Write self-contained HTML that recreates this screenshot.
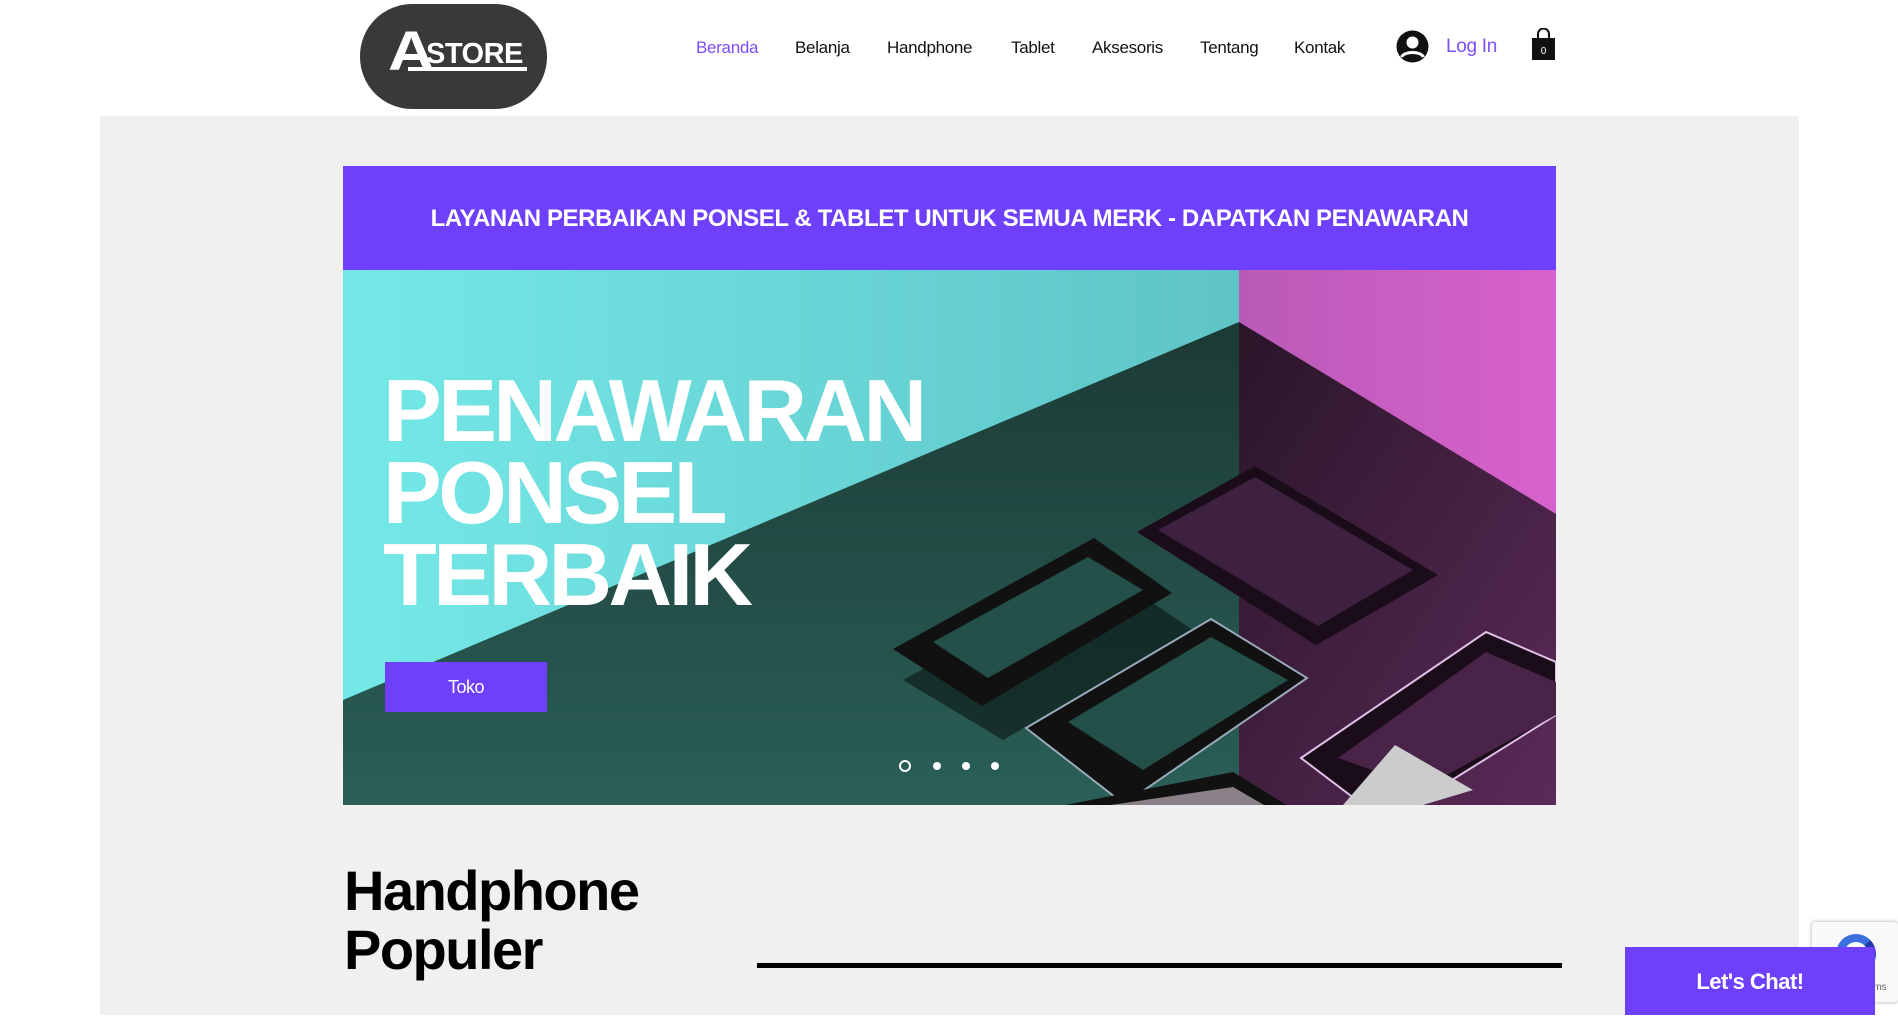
<!DOCTYPE html>
<html><head><meta charset="utf-8"><style>
*{margin:0;padding:0;box-sizing:border-box}
body{width:1898px;height:1015px;overflow:hidden;background:#fff;font-family:"Liberation Sans",sans-serif;position:relative}
.abs{position:absolute}
.nav a{position:absolute;top:38px;font-size:17px;color:#111;text-decoration:none;letter-spacing:-0.3px}
</style></head><body>
<div class="abs" style="left:360px;top:4px;width:187px;height:105px;border-radius:52px/52px;background:#3a383a"></div>
<div class="abs" style="left:388px;top:24px;color:#fff;font-weight:bold;font-size:56px;line-height:54px;transform:scaleX(1.15);transform-origin:left">A</div>
<div class="abs" style="left:426px;top:40px;color:#fff;font-weight:bold;font-size:29px;line-height:29px;letter-spacing:-0.5px">STORE</div>
<div class="abs" style="left:408px;top:67px;width:119px;height:4px;background:#fff"></div>
<div class="nav">
<a style="left:696px;color:#7b4ef9">Beranda</a>
<a style="left:795px">Belanja</a>
<a style="left:887px">Handphone</a>
<a style="left:1011px">Tablet</a>
<a style="left:1092px">Aksesoris</a>
<a style="left:1200px">Tentang</a>
<a style="left:1294px">Kontak</a>
</div>
<svg class="abs" style="left:1396px;top:30px" width="33" height="33" viewBox="0 0 33 33"><circle cx="16.5" cy="16.5" r="16" fill="#111"/><circle cx="16.5" cy="12.5" r="6" fill="#fff"/><path d="M5.5 27c3-6 19-6 22 0" stroke="#fff" stroke-width="3" fill="none"/></svg>
<div class="abs" style="left:1446px;top:36px;font-size:19px;color:#7b4ef9;letter-spacing:-0.3px">Log In</div>
<svg class="abs" style="left:1531px;top:28px" width="25" height="33" viewBox="0 0 25 33"><path d="M7 10V6a5.5 5.5 0 0 1 11 0v4" stroke="#111" stroke-width="2" fill="none"/><rect x="1" y="10" width="23" height="22" fill="#111"/><text x="12.5" y="26" font-size="10" fill="#fff" text-anchor="middle" font-family="Liberation Sans">0</text></svg>

<div class="abs" style="left:100px;top:116px;width:1699px;height:899px;background:#f0f0f0"></div>
<div class="abs" style="left:343px;top:166px;width:1213px;height:104px;background:#6f40fb"></div>
<div class="abs" style="left:343px;top:205px;width:1213px;text-align:center;color:#fff;font-weight:bold;font-size:24px;letter-spacing:-0.4px">LAYANAN PERBAIKAN PONSEL &amp; TABLET UNTUK SEMUA MERK - DAPATKAN PENAWARAN</div>

<svg class="abs" style="left:343px;top:270px" width="1213" height="535" viewBox="0 0 1213 535">
<defs>
<linearGradient id="t" x1="0" y1="0" x2="1" y2="0"><stop offset="0" stop-color="#74e8e8"/><stop offset="1" stop-color="#5fc4c6"/></linearGradient>
<linearGradient id="m" x1="0" y1="0" x2="1" y2="0"><stop offset="0" stop-color="#b95ab8"/><stop offset="1" stop-color="#d862cc"/></linearGradient>
<linearGradient id="g" x1="0" y1="0" x2="0" y2="1"><stop offset="0" stop-color="#1c3a35"/><stop offset="1" stop-color="#2a5f57"/></linearGradient>
<linearGradient id="p" x1="0" y1="0" x2="1" y2="1"><stop offset="0" stop-color="#2a1528"/><stop offset="1" stop-color="#5a2a58"/></linearGradient>
</defs>
<rect width="896" height="535" fill="url(#t)"/>
<rect x="896" width="317" height="535" fill="url(#m)"/>
<polygon points="0,430 896,52 896,535 0,535" fill="url(#g)"/>
<polygon points="896,52 1213,244 1213,535 896,535" fill="url(#p)"/>
<polygon points="560,410 760,300 850,360 660,470" fill="#0a1412" opacity=".6"/>
<polygon points="550,379 751,268 829,323 639,436" fill="#111"/>
<polygon points="590,372 745,287 800,320 645,408" fill="#24504a"/>
<polygon points="794,262 912,196 1095,305 973,375" fill="#1a0c18"/>
<polygon points="815,260 912,207 1070,300 975,356" fill="#3e2040"/>
<polygon points="683,458 868,349 964,408 781,534" fill="#111" stroke="#9ab" stroke-width="2"/>
<polygon points="725,452 868,367 945,410 800,500" fill="#24504a"/>
<polygon points="958,488 1143,362 1213,392 1213,445 1069,535 1020,535" fill="#1a0c18" stroke="#e0c0e8" stroke-width="2"/>
<polygon points="995,488 1143,382 1213,412 1213,445 1080,518" fill="#4a2448"/>
<polygon points="672,545 890,502 1010,576 851,680" fill="#111"/>
<polygon points="700,545 890,517 990,575 860,660" fill="#8a8088"/>
<polygon points="1000,535 1052,475 1130,520 1080,535" fill="#ccc"/>
<circle cx="562" cy="496" r="5" fill="none" stroke="#fff" stroke-width="2"/>
<circle cx="594" cy="496" r="4" fill="#fff"/>
<circle cx="623" cy="496" r="4" fill="#fff"/>
<circle cx="652" cy="496" r="4" fill="#fff"/>
</svg>
<div class="abs" style="left:383px;top:370px;color:#fff;font-weight:bold;font-size:88px;line-height:82px;letter-spacing:-3.5px">PENAWARAN<br>PONSEL<br>TERBAIK</div>
<div class="abs" style="left:385px;top:662px;width:162px;height:50px;background:#6f40fb;color:#fff;font-size:18px;text-align:center;line-height:50px;letter-spacing:-0.5px">Toko</div>

<div class="abs" style="left:344px;top:861px;font-weight:bold;font-size:56px;line-height:59px;color:#000;letter-spacing:-1.5px">Handphone<br>Populer</div>
<div class="abs" style="left:757px;top:963px;width:805px;height:5px;background:#000"></div>

<div class="abs" style="left:1812px;top:922px;width:86px;height:80px;background:#f9f9f9;box-shadow:0 0 4px #aaa;border-radius:3px"></div>
<div class="abs" style="left:1836px;top:934px;width:40px;height:40px;border-radius:50%;border:8px solid #3b6fe0;border-right-color:#1c3aa9"></div>
<div class="abs" style="left:1870px;top:982px;font-size:10px;color:#666">rms</div>
<div class="abs" style="left:1625px;top:947px;width:250px;height:68px;background:#6f40fb;color:#fff;font-weight:bold;font-size:22px;text-align:center;line-height:70px;letter-spacing:-0.5px">Let's Chat!</div>
</body></html>
